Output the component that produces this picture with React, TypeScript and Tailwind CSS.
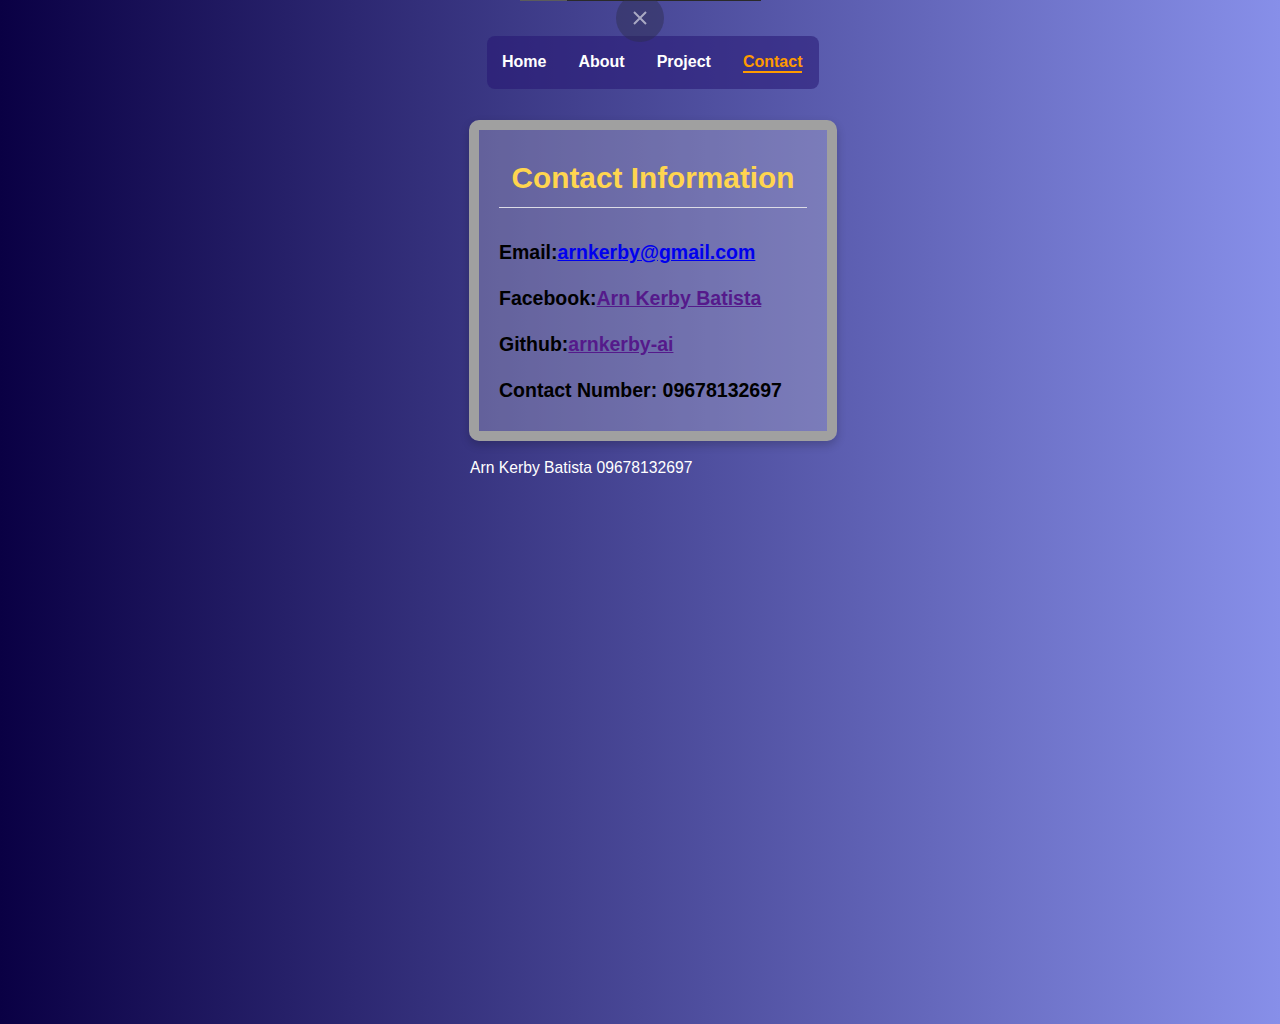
export default function App() {
  const links = [
    { label: "Home", active: false },
    { label: "About", active: false },
    { label: "Project", active: false },
    { label: "Contact", active: true },
  ];

  return (
    <div className="relative min-h-[1024px] w-full bg-[linear-gradient(to_right,#0a0044,#878fe9)] font-['Liberation_Sans',Arial,sans-serif]">
      {/* strip of something sitting above the viewport */}
      <div className="absolute left-[520px] top-0 flex h-px w-[241px]">
        <div className="w-[47px] bg-[#5c5c5c]" />
        <div className="flex-1 bg-[#2a2a2a]" />
      </div>

      {/* close button */}
      <button className="absolute left-[616px] top-[-6px] flex h-12 w-12 items-center justify-center rounded-full bg-[rgba(45,45,75,0.45)]">
        <svg width="16" height="16" viewBox="0 0 16 16" fill="none" stroke="#a9a9c4" strokeWidth="2">
          <path d="M2 2L14 14M14 2L2 14" />
        </svg>
      </button>

      <div className="mx-auto w-[394px] pl-[26px] pt-9">
        <nav className="mx-auto flex h-[53px] w-[332px] items-center gap-8 rounded-lg bg-[rgba(38,22,115,0.55)] px-[15px]">
          {links.map((link) => (
            <a
              key={link.label}
              className={
                link.active
                  ? "border-b-2 border-[#ff9a00] text-base font-bold leading-[18px] text-[#ff9a00]"
                  : "border-b-2 border-transparent text-base font-bold leading-[18px] text-white"
              }
            >
              {link.label}
            </a>
          ))}
        </nav>

        <div className="mt-[31px] rounded-[10px] border-[10px] border-[#a0a0a0] bg-[rgba(200,198,215,0.3)] px-5 pb-7 pt-[31px] shadow-[0_4px_10px_rgba(0,0,0,0.2)]">
          <h2 className="border-b border-[#dcdce6] pb-3 text-center text-[29.8px] font-bold leading-[34px] text-[#ffd54f]">
            Contact Information
          </h2>
          <div className="mt-[31px] flex flex-col gap-5 text-[19.5px] font-bold leading-[26px] text-black">
            <p>
              Email:<a className="text-[#0000ee] underline">arnkerby@gmail.com</a>
            </p>
            <p>
              Facebook:<a className="text-[#551a8b] underline">Arn Kerby Batista</a>
            </p>
            <p>
              Github:<a className="text-[#551a8b] underline">arnkerby-ai</a>
            </p>
            <p>Contact Number: 09678132697</p>
          </div>
        </div>

        <p className="ml-px mt-[17px] text-[15.7px] leading-5 text-white">Arn Kerby Batista 09678132697</p>
      </div>
    </div>
  );
}
